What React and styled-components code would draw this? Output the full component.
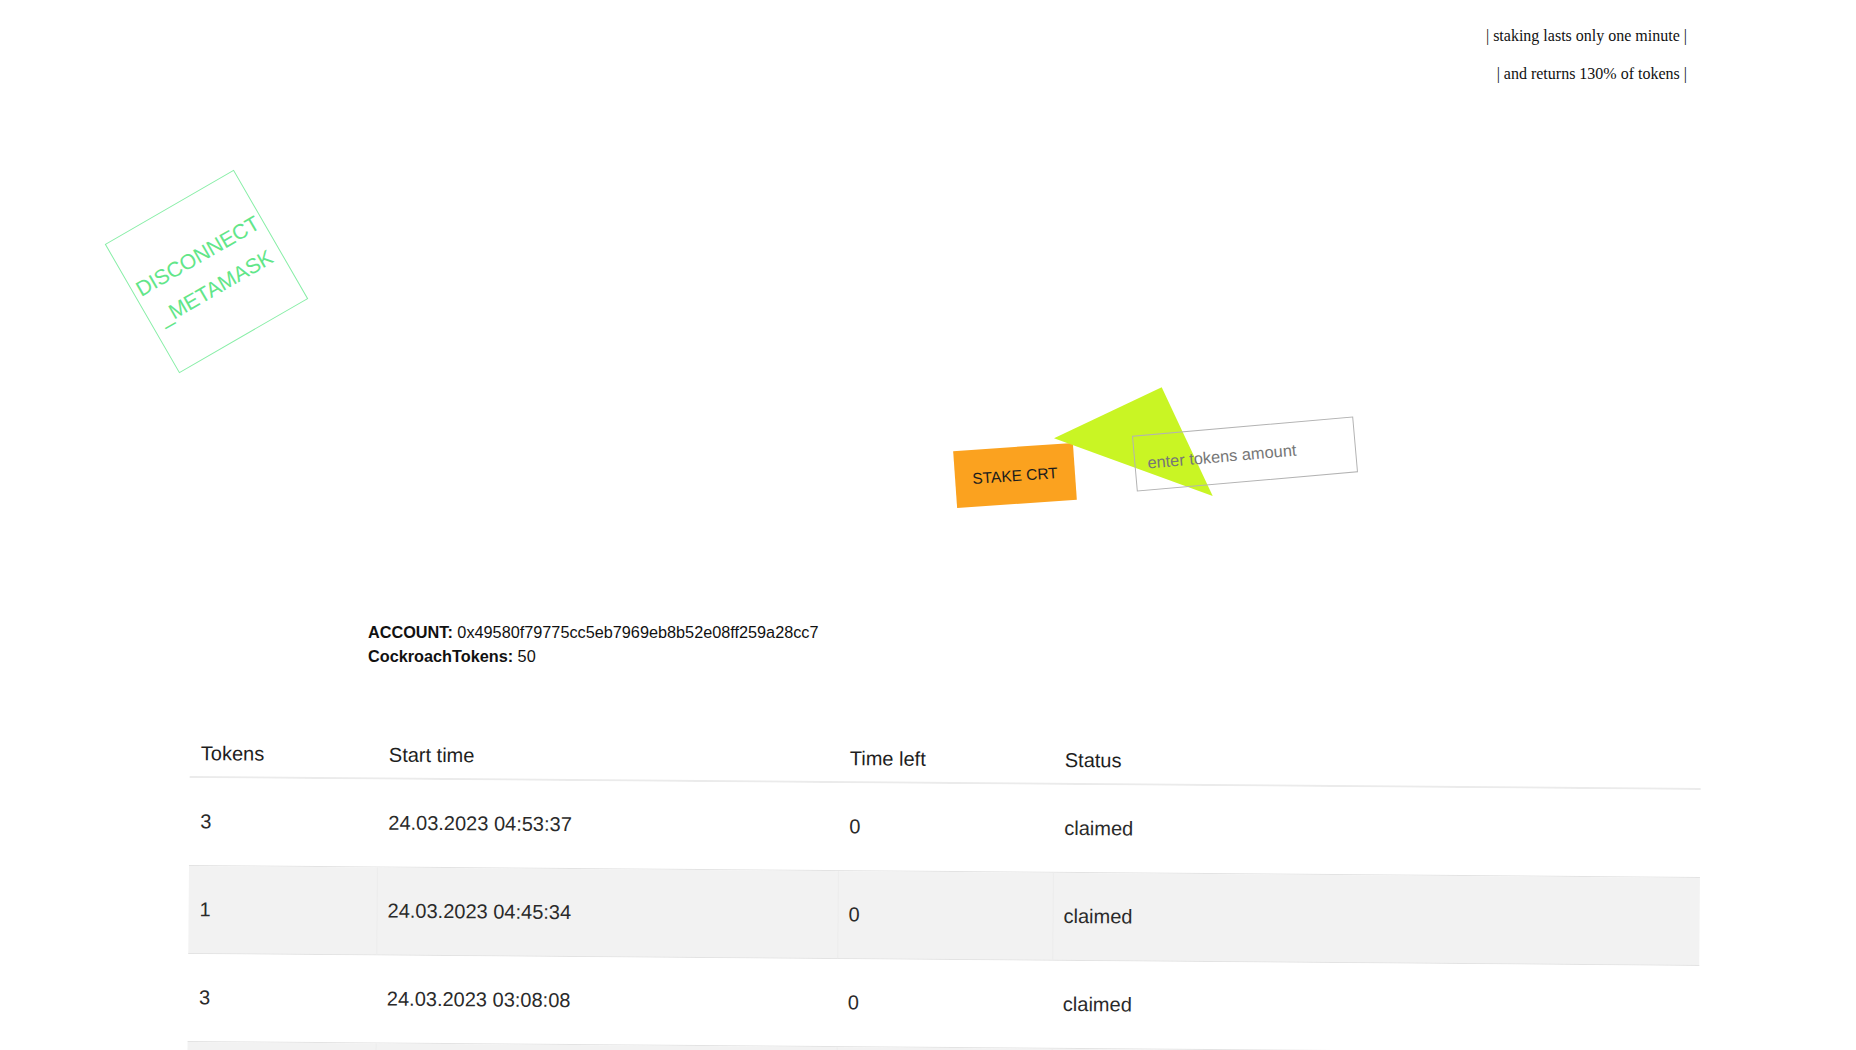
import React from 'react'
import styled, { createGlobalStyle } from 'styled-components'

const GlobalStyle = createGlobalStyle`
    html {
        scrollbar-width: none;
    }
    body {
        margin: 0;
        background: #fff;
        overflow-x: hidden;
        font-family: "Liberation Sans", Arial, sans-serif;
        color: #222;
    }
`

const Page = styled.div`
    width: 1856px;
`

const Notes = styled.div`
    display: flex;
    flex-direction: column;
    align-items: flex-end;
    gap: 18px;
    padding: 26px 169px 0 0;
    font-family: "Liberation Serif", "Times New Roman", serif;
    font-size: 16px;
    color: #111;
`

const Note = styled.p`
    margin: 0;
    line-height: 20px;
`

const DisconnectButton = styled.button`
    display: flex;
    flex-direction: column;
    align-items: center;
    justify-content: center;
    box-sizing: border-box;
    width: 149px;
    height: 149px;
    margin: 112.5px 0 0 131.5px;
    padding: 0;
    border: 1px solid #88eea7;
    background: transparent;
    color: #62e689;
    font-family: "Liberation Sans", Arial, sans-serif;
    font-size: 21px;
    line-height: 36px;
    transform: rotate(-30deg);
    cursor: pointer;
`

const StakeRow = styled.div`
    position: relative;
    display: flex;
    align-items: flex-start;
    margin-top: 80.5px;
    padding-left: 955px;
`

const StakeButton = styled.button`
    position: relative;
    z-index: 1;
    width: 120px;
    height: 57px;
    margin-top: 20.5px;
    padding: 0;
    border: none;
    background: #fba21f;
    color: #1c1c1c;
    font-family: "Liberation Sans", Arial, sans-serif;
    font-size: 15.5px;
    transform: rotate(-4deg);
    cursor: pointer;
`

const Arrow = styled.svg`
    position: absolute;
    left: 1054px;
    top: -39px;
    z-index: 2;
`

const TokensInput = styled.input`
    position: relative;
    z-index: 3;
    box-sizing: border-box;
    width: 222px;
    height: 56px;
    margin-left: 58.7px;
    padding: 0 12px;
    border: 1px solid #b3b3b3;
    background: transparent;
    font-family: "Liberation Sans", Arial, sans-serif;
    font-size: 16.4px;
    color: #333;
    outline: none;
    transform: rotate(-5deg);

    &::placeholder {
        color: #767676;
    }
`

const Account = styled.div`
    margin-top: 116px;
    padding-left: 368px;
    font-size: 16.25px;
    line-height: 24px;
    color: #111;
`

const Table = styled.div`
    width: 1511px;
    margin: 69.5px 0 0 190px;
    transform: rotate(0.45deg);
    transform-origin: 50% 0;
`

const Row = styled.div`
    display: grid;
    grid-template-columns: 188px 461px 215px 647px;
    box-sizing: border-box;
    height: ${p => (p.$head ? '47px' : '88px')};
    border-bottom: ${p => (p.$head ? '2px solid #ebebeb' : '1px solid #e3e3e3')};
    background: ${p => (p.$striped ? '#f2f2f2' : '#fff')};
    font-size: 20px;
    color: ${p => (p.$head ? '#1e1e1e' : '#2a2a2a')};
`

const Cell = styled.div`
    display: flex;
    align-items: center;
    padding: 0 10px;
    border-left: 1px solid ${p => (p.$divider ? '#ececec' : 'transparent')};
`

const stakes = [
    { tokens: 3, start: '24.03.2023 04:53:37', left: 0, status: 'claimed' },
    { tokens: 1, start: '24.03.2023 04:45:34', left: 0, status: 'claimed' },
    { tokens: 3, start: '24.03.2023 03:08:08', left: 0, status: 'claimed' },
    { tokens: 2, start: '23.03.2023 22:17:51', left: 0, status: 'claimed' },
]

function App() {
    return (
        <Page>
            <GlobalStyle />
            <Notes>
                <Note>| staking lasts only one minute |</Note>
                <Note>| and returns 130% of tokens |</Note>
            </Notes>

            <DisconnectButton>
                <span>DISCONNECT</span>
                <span>_METAMASK</span>
            </DisconnectButton>

            <StakeRow>
                <StakeButton>STAKE CRT</StakeButton>
                <Arrow width="159" height="109" viewBox="0 0 159 109">
                    <polygon points="0,51.3 107.7,0.3 158.7,109" fill="#c9f524" />
                </Arrow>
                <TokensInput type="text" placeholder="enter tokens amount" />
            </StakeRow>

            <Account>
                <div><b>ACCOUNT:</b> 0x49580f79775cc5eb7969eb8b52e08ff259a28cc7</div>
                <div><b>CockroachTokens:</b> 50</div>
            </Account>

            <Table>
                <Row $head>
                    <Cell>Tokens</Cell>
                    <Cell>Start time</Cell>
                    <Cell>Time left</Cell>
                    <Cell>Status</Cell>
                </Row>
                {stakes.map((s, i) => {
                    const striped = i % 2 === 1
                    return (
                        <Row key={i} $striped={striped}>
                            <Cell>{s.tokens}</Cell>
                            <Cell $divider={striped}>{s.start}</Cell>
                            <Cell $divider={striped}>{s.left}</Cell>
                            <Cell $divider={striped}>{s.status}</Cell>
                        </Row>
                    )
                })}
            </Table>
        </Page>
    )
}

export default App
